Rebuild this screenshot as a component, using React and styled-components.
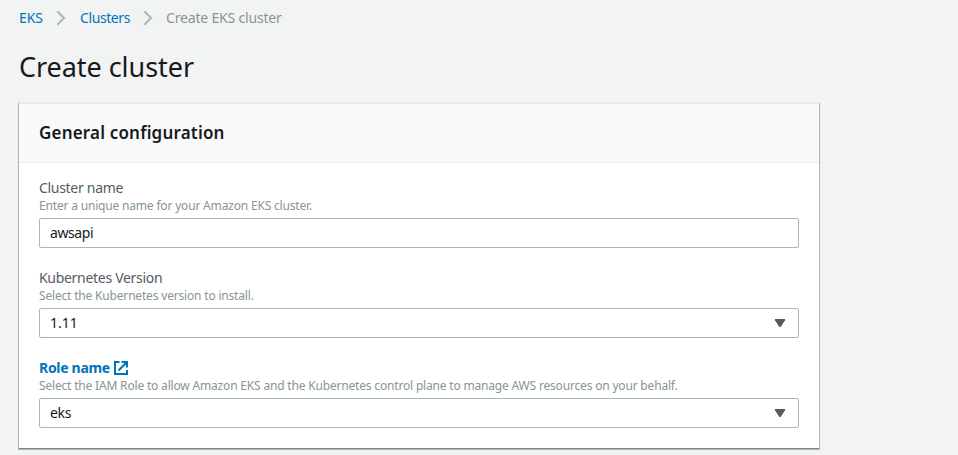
import React from "react";
import styled, { createGlobalStyle } from "styled-components";

const GlobalStyle = createGlobalStyle`
  * { box-sizing: border-box; }
  body {
    margin: 0;
    background: #f2f3f3;
    color: #16191f;
    font-family: "Noto Sans", "Open Sans", sans-serif;
    font-size: 14px;
    overflow: hidden;
  }
`;

const Page = styled.main`
  height: 455px;
  padding: 8px 0 0 18px;
`;

const Breadcrumbs = styled.nav`
  display: flex;
  align-items: center;
  height: 20px;
  padding-left: 1px;
  font-size: 14px;
  line-height: 20px;
  white-space: nowrap;
`;

const Crumb = styled.a`
  width: ${(p) => p.$width}px;
  color: ${(p) => (p.$current ? "#879596" : "#0073bb")};
  letter-spacing: ${(p) => p.$spacing}px;
`;

const Chevron = styled.svg`
  flex: none;
  width: 10px;
  height: 16px;
  margin: 0 ${(p) => p.$after}px 0 12px;
  fill: none;
  stroke: #aab7b8;
  stroke-width: 2;
`;

const Title = styled.h1`
  margin: 21px 0 0 1px;
  height: 36px;
  font-size: 27px;
  font-weight: 400;
  line-height: 36px;
  letter-spacing: -0.05px;
`;

const Card = styled.section`
  width: 802px;
  height: 348px;
  margin-top: 17px;
  background: #fff;
  border: 1px solid #aab7b8;
  border-top: 2px solid #e9ebeb;
  border-bottom: 1px solid #aab7b8;
  box-shadow: inset 0 -1px 0 #78878a;
`;

const CardHeader = styled.header`
  height: 59px;
  padding: 0 20px;
  background: #fafafa;
  border-bottom: 1px solid #eaeded;
`;

const CardTitle = styled.h2`
  margin: 0;
  font-size: 17px;
  font-weight: 600;
  line-height: 58px;
  letter-spacing: 0.18px;
`;

const Fields = styled.div`
  display: grid;
  gap: 20px;
  padding: 15px 20px 0;
`;

const Field = styled.div`
  height: 70px;
`;

const Label = styled.label`
  display: flex;
  align-items: center;
  height: 20px;
  line-height: 20px;
  font-size: 14px;
  color: #545b64;
  letter-spacing: -0.3px;
`;

const RoleLink = styled.a`
  display: flex;
  align-items: center;
  gap: 3px;
  font-weight: 700;
  color: #0073bb;
`;

const ExternalIcon = styled.svg`
  width: 16px;
  height: 16px;
  fill: none;
  stroke: #0073bb;
  stroke-width: 2;
`;

const Hint = styled.div`
  height: 20px;
  font-size: 12px;
  line-height: 16px;
  color: #879596;
  white-space: nowrap;
  letter-spacing: -0.18px;
`;

const Control = styled.div`
  display: flex;
  align-items: center;
  justify-content: space-between;
  height: 30px;
  padding: 0 13px 0 10px;
  border: 1px solid #aab7b8;
  border-radius: 2px;
  background: #fff;
  font-size: 14px;
  line-height: 28px;
  letter-spacing: ${(p) => p.$spacing || 0}px;
`;

const Caret = styled.svg`
  width: 10px;
  height: 8px;
  fill: #545b64;
`;

const Separator = ({ after }) => (
  <Chevron viewBox="0 0 10 16" $after={after} aria-hidden="true">
    <path d="M1.3 1.3 8 8 1.3 14.7" />
  </Chevron>
);

const DownCaret = () => (
  <Caret viewBox="0 0 10 8" aria-hidden="true">
    <path d="M0 0h10v1.2L5.7 8H4.3L0 1.2z" />
  </Caret>
);

export default function App() {
  return (
    <>
      <GlobalStyle />
      <Page>
        <Breadcrumbs>
          <Crumb $width={25} $spacing={-0.1}>EKS</Crumb>
          <Separator after={14} />
          <Crumb $width={51} $spacing={-0.4}>Clusters</Crumb>
          <Separator after={13} />
          <Crumb $current $spacing={-0.18}>Create EKS cluster</Crumb>
        </Breadcrumbs>
        <Title>Create cluster</Title>
        <Card>
          <CardHeader>
            <CardTitle>General configuration</CardTitle>
          </CardHeader>
          <Fields>
            <Field>
              <Label>Cluster name</Label>
              <Hint>Enter a unique name for your Amazon EKS cluster.</Hint>
              <Control $spacing={-0.4}>awsapi</Control>
            </Field>
            <Field>
              <Label>Kubernetes Version</Label>
              <Hint>Select the Kubernetes version to install.</Hint>
              <Control>1.11<DownCaret /></Control>
            </Field>
            <Field>
              <Label as="div">
                <RoleLink>
                  Role name
                  <ExternalIcon viewBox="0 0 16 16" aria-hidden="true">
                    <path d="M6.5 2H2v12h12v-4M8.5 2H14v5.5M14 2 5.5 10.5" />
                  </ExternalIcon>
                </RoleLink>
              </Label>
              <Hint>
                Select the IAM Role to allow Amazon EKS and the Kubernetes control plane to manage AWS resources on your behalf.
              </Hint>
              <Control $spacing={-0.3}>eks<DownCaret /></Control>
            </Field>
          </Fields>
        </Card>
      </Page>
    </>
  );
}
